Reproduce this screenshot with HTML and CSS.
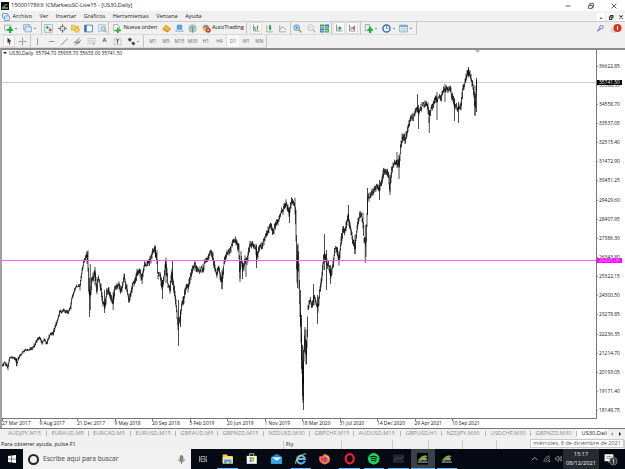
FILE: index.html
```html
<!DOCTYPE html>
<html lang="es">
<head>
    <meta charset="UTF-8">
    <meta name="viewport" content="width=device-width, initial-scale=1.0">
    <title>1500017863: ICMarketsSC-Live15 - [US30,Daily]</title>
    <link rel="stylesheet" href="styles.css">
</head>
<body>

<!-- Title bar -->
<header class="titlebar">
    <svg class="app-icon" viewBox="0 0 16 16"><rect width="16" height="16" fill="#050805"/><path d="M2 11l5-6 5-1 2 2-5 2-2 3z" fill="#5d7a45"/><path d="M2 12h12" stroke="#ddd" stroke-width="2"/></svg>
    <span class="title">1500017863: ICMarketsSC-Live15 - [US30,Daily]</span>
    <div class="window-buttons">
        <svg viewBox="0 0 10 10"><path d="M1 5h8"/></svg>
        <svg viewBox="0 0 10 10"><path d="M1 4h6v5H1zM3 4V1h6v6H7"/></svg>
        <svg viewBox="0 0 10 10"><path d="M1 1l8 8M9 1L1 9"/></svg>
    </div>
</header>

<!-- Menu -->
<nav class="menubar">
    <svg class="menu-icon" viewBox="0 0 16 16"><rect x="1" y="1" width="11" height="9" rx="1" fill="#e6f2fc" stroke="#3f87cf" stroke-width="1.500"/><rect x="5" y="6" width="10" height="9" rx="1" fill="#fff" stroke="#3f87cf" stroke-width="1.500"/><path d="M7 12l2-3 2 2 2-2" fill="none" stroke="#3f87cf"/></svg>
    <span>Archivo</span><span>Ver</span><span>Insertar</span><span>Gráficos</span><span>Herramientas</span><span>Ventana</span><span>Ayuda</span>
    <div class="child-buttons">
        <svg viewBox="0 0 10 10"><path d="M3.500 6.500h3"/></svg>
        <svg viewBox="0 0 10 10"><path d="M3 5h3v3H3zM4.500 4.500V3h3v3H6"/></svg>
        <svg viewBox="0 0 10 10"><path d="M3 3l4 4M7 3L3 7"/></svg>
    </div>
</nav>

<!-- Standard toolbar -->
<div class="toolbar toolbar-main">
    <div class="group group-new">
        <svg viewBox="0 0 16 16"><path d="M1 2h11v9H1z" fill="#f2f8f2" stroke="#779" /><path d="M9 5h4v4h3v3h-3v4H9v-4H5V9h4z" fill="#12b52a"/></svg><i class="caret"></i>
        <svg viewBox="0 0 16 16"><path d="M1 1h11v9H1z" fill="#d5e7f7" stroke="#4f86bb"/><path d="M4 5h11v9H4z" fill="#dcebf8" stroke="#4f86bb"/></svg><i class="caret"></i>
    </div>
    <div class="group group-panels">
        <svg viewBox="0 0 16 16"><path d="M1 1h14v14H1z" fill="#e8f3fc" stroke="#5a9bd5"/><path d="M3 6l3-3 3 3-3 3z" fill="#27a744"/><path d="M8 10l3-3 3 3-3 4z" fill="#e3552f"/></svg>
        <svg viewBox="0 0 16 16"><circle cx="8" cy="8" r="4.500" fill="none" stroke="#555" stroke-width="1.300"/><path d="M8 0v6M8 10v6M0 8h6M10 8h6" stroke="#555" stroke-width="1.300"/></svg>
        <svg viewBox="0 0 16 16"><path d="M1 2h5l1 2h6v7H1z" fill="#f6cf5d" stroke="#c99a25"/><path d="M11 6l1.500 3 3.500.5-2.500 2 .5 3.500-3-1.500L8 15l.5-3.500L6 9.500 9.500 9z" fill="#ffdf4f" stroke="#c99a25"/></svg>
        <svg viewBox="0 0 16 16"><path d="M1 2h14v12H1z" fill="#fff" stroke="#3b79bd" stroke-width="1.500"/><path d="M1 2h4v12H1z" fill="#3b79bd"/></svg>
        <svg viewBox="0 0 16 16"><path d="M1 1h12v12H1z" fill="#e3edf5" stroke="#8aabc6"/><circle cx="9" cy="8" r="3.500" fill="#cfe6fa" stroke="#4d82b0"/><path d="M12 11l3 4" stroke="#d79e2c" stroke-width="2"/></svg>
    </div>
    <div class="group group-trade">
        <svg viewBox="0 0 16 16"><path d="M3 1h7l3 3v8H3z" fill="#fff" stroke="#777"/><path d="M9 6h3v4h4v3h-4v3H9v-3H5v-3h4z" fill="#12b52a"/></svg><span class="label label-order">Nueva orden</span>
        <svg viewBox="0 0 16 16"><path d="M1 9l6-7 8 6-5 6z" fill="#f2b632" stroke="#c3861a"/><path d="M2 10l8 4 5-5" fill="none" stroke="#a96e13"/></svg>
        <svg viewBox="0 0 16 16"><path d="M4 2h8v7H4z" fill="#5ba8e8" stroke="#2877bd"/><path d="M1 13q2-5 6-3 4-2 8 3z" fill="#d8e7f4" stroke="#6b93b8"/></svg>
        <svg viewBox="0 0 16 16"><circle cx="8" cy="8" r="6.500" fill="#b9c7ce" stroke="#899aa3"/><path d="M8 7v8M5 7q3-4 6 0" stroke="#28a745" stroke-width="1.500" fill="none"/></svg>
        <svg viewBox="0 0 16 16"><circle cx="7" cy="7" r="6" fill="#efc14d"/><path d="M1 6q6-8 12 0z" fill="#3f90cf"/><circle cx="11" cy="11" r="4.500" fill="#df3121"/><path d="M9.500 9.500h3v3h-3z" fill="#fff"/></svg><span class="label label-auto">AutoTrading</span>
    </div>
    <div class="group group-type">
        <svg class="pressed" viewBox="0 0 16 16"><path d="M3 1v13h12" stroke="#777" stroke-width="1.500" fill="none"/><path d="M6 6v6M6 7H4M6 11h2M11 3v8M11 4h2M11 10H9" stroke="#24a33c" stroke-width="1.800"/></svg>
        <svg viewBox="0 0 16 16"><path d="M3 2v12h11" stroke="#777" fill="none"/><path d="M9 1v11" stroke="#128a2b"/><path d="M7 3h4v7H7z" fill="#1cae38"/></svg>
        <svg viewBox="0 0 16 16"><path d="M3 2v12h11" stroke="#777" fill="none"/><path d="M3 10l4-5 3 1 4 5" stroke="#299d3e" fill="none"/></svg>
    </div>
    <div class="group group-zoom">
        <svg viewBox="0 0 16 16"><path d="M10 10l5 5" stroke="#d6a034" stroke-width="3"/><circle cx="6.500" cy="6.500" r="5" fill="#d9efff" stroke="#2e80cc" stroke-width="1.500"/><path d="M4 6.500h5M6.500 4v5" stroke="#2e80cc" stroke-width="1.500"/></svg>
        <svg viewBox="0 0 16 16"><path d="M10 10l5 5" stroke="#aaa" stroke-width="2"/><circle cx="6.500" cy="6.500" r="5" fill="#f5f5f5" stroke="#aaa" stroke-width="1.300"/><path d="M4 6.500h5" stroke="#aaa"/></svg>
        <svg viewBox="0 0 16 16"><path d="M0 1h7.500v6H0zM8.500 8H16v7H8.500z" fill="#3aa742"/><path d="M8.500 1H16v6H8.500zM0 8h7.500v7H0z" fill="#3473be"/><path d="M1 5h6M9 5h6M1 12h6M9 12h6" stroke="#e9f5e9" stroke-width="1.500"/></svg>
    </div>
    <div class="group group-shift">
        <svg class="pressed" viewBox="0 0 16 16"><path d="M3 1v13h12M6 6v6" stroke="#777" stroke-width="1.500" fill="none"/><path d="M8 4l6 4.500L8 13z" fill="#1fab3b"/></svg>
        <svg class="pressed" viewBox="0 0 16 16"><path d="M3 1v13h12M6 5v7M13 3v10" stroke="#667a90" stroke-width="1.500" fill="none"/><path d="M13 4L7 8l6 4z" fill="#d65a30"/></svg>
    </div>
    <div class="group group-extra">
        <svg viewBox="0 0 16 16"><path d="M2 1h8v11H2z" fill="#e7efe7" stroke="#777"/><path d="M9 5h4v4h3v3h-3v4H9v-4H6V9h3z" fill="#12b52a"/></svg><i class="caret"></i>
        <svg viewBox="0 0 16 16"><circle cx="8" cy="8" r="6.300" fill="#eaf5ff" stroke="#2671bd" stroke-width="2.500"/><path d="M8 4v4h3" stroke="#444" fill="none"/></svg><i class="caret"></i>
        <svg viewBox="0 0 16 16"><path d="M1 2h14v12H1z" fill="#edf6fd" stroke="#4e8bc4"/><path d="M1 2h14v3H1z" fill="#63a0d6"/><path d="M3 8l3-1 3 1 4-1M3 11h10" stroke="#70a070" fill="none"/></svg><i class="caret"></i>
    </div>
    <div class="toolbar-right">
        <svg viewBox="0 0 16 16"><circle cx="10" cy="5" r="4" fill="#f5f8ff" stroke="#486fc4" stroke-width="2"/><path d="M7 8l-6 6" stroke="#486fc4" stroke-width="2.500"/></svg>
        <svg class="alert" viewBox="0 0 24 20"><path d="M2 13q5 6 11 3l-3-8q-6-1-8 5z" fill="#ddd" stroke="#aaa"/><circle cx="15" cy="8" r="8" fill="#dc341e"/><path d="M15 4v8" stroke="#fff" stroke-width="2"/></svg>
    </div>
</div>

<!-- Line studies and timeframes -->
<div class="toolbar toolbar-lines">
    <div class="group group-cursor">
        <svg class="pressed" viewBox="0 0 16 16"><path d="M5 1l8 8H9l2 5-2 1-2-5-2 2z" fill="#333"/></svg>
        <svg viewBox="0 0 16 16"><path d="M8 1v6M8 9v6M1 8h6M9 8h6" stroke="#777" stroke-width="1.300"/></svg>
    </div>
    <div class="group group-studies">
        <svg viewBox="0 0 16 16"><path d="M8 2v12" stroke="#777" stroke-width="1.300"/></svg>
        <svg viewBox="0 0 16 16"><path d="M3 8h10" stroke="#777" stroke-width="1.300"/></svg>
        <svg viewBox="0 0 16 16"><path d="M2 14L14 3" stroke="#666" stroke-width="1.300"/></svg>
        <svg viewBox="0 0 16 16"><path d="M1 11l11-9M3 15L15 5M5 8l4 5M8 5l3 6M4 10h8" stroke="#666" stroke-width="1.200"/></svg>
        <svg viewBox="0 0 16 16"><path d="M1 3h14M1 7h14M1 11h14" stroke="#777" stroke-dasharray="2 1"/><path d="M12 10v5" stroke="#777"/></svg>
        <b>A</b>
        <svg viewBox="0 0 16 16"><path d="M2 2h12v12H2z" fill="none" stroke="#888" stroke-dasharray="2 1"/><path d="M5 5h6M8 5v7" stroke="#555" stroke-width="1.600"/></svg>
        <svg viewBox="0 0 16 16"><path d="M1 5l4-4 4 4-4 3zM8 11l3-3 4 4-4 3z" fill="#444"/><path d="M4 6l7 6" stroke="#555"/></svg>
        <i class="caret"></i>
    </div>
    <div class="group group-frames">
        <span>M1</span><span>M5</span><span>M15</span><span>M30</span><span>H1</span><span>H4</span><span class="pressed">D1</span><span>W1</span><span>MN</span>
    </div>
</div>

<!-- Chart -->
<main class="chart">
    <div class="plot">
        <p class="chart-info"><i class="caret"></i><span>US30,Daily&nbsp; 35794.70 35935.70 35633.00 35741.50</span></p>
        <svg class="bars" id="bars" viewBox="2 50 594 368">
            <path d="M2 82.500h594" stroke="#cfcfcf" stroke-width="1"/>
            <path d="M475 50.300h5l-2.500 2.500z" fill="#aaa"/>
            <path id="history" fill="none" stroke="#000" stroke-width="0.700"/>
            <path d="M2 260.500h594" stroke="#ff5cff" stroke-width="1"/>
        </svg>
    </div>
    <div class="prices">
        <span>36622.85</span><span>35580.35</span><span>34558.70</span><span>33537.05</span><span>32515.40</span><span>31472.90</span><span>30451.25</span><span>29429.60</span><span>28407.95</span><span>27386.30</span><span>26343.80</span><span>25322.15</span><span>24300.50</span><span>23278.85</span><span>22236.35</span><span>21214.70</span><span>20193.05</span><span>19171.40</span><span>18149.75</span>
        <b class="tag tag-bid">35741.50</b>
        <b class="tag tag-line">26205.00</b>
    </div>
    <div class="dates">
        <span>27 Mar 2017</span><span>9 Aug 2017</span><span>21 Dec 2017</span><span>9 May 2018</span><span>20 Sep 2018</span><span>5 Feb 2019</span><span>20 Jun 2019</span><span>1 Nov 2019</span><span>18 Mar 2020</span><span>31 Jul 2020</span><span>14 Dec 2020</span><span>29 Apr 2021</span><span>10 Sep 2021</span>
    </div>
</main>

<!-- Chart tabs -->
<div class="tabs">
    <span>AUDJPY,M15</span><span>EURAUD,M5</span><span>EURCAD,M5</span><span>EURUSD,M15</span><span>GBPAUD,M5</span><span>GBPNZD,M15</span><span>NZDUSD,M30</span><span>GBPCHF,M15</span><span>AUDUSD,M15</span><span>GBPUSD,H1</span><span>NZDJPY,M30</span><span>USDCHF,M30</span><span>GBPNZD,M30</span><span class="active">US30,Dail</span>
    <i class="scroll scroll-left"></i><i class="scroll scroll-right"></i>
</div>

<!-- Status bar -->
<div class="status">
    <span>Para obtener ayuda, pulse F1</span><span>Fty</span><span></span><span></span><span></span><span></span><span></span>
    <div class="date-tip">miércoles, 8 de diciembre de 2021</div>
</div>

<!-- Windows taskbar -->
<footer class="taskbar">
    <div class="start"><svg viewBox="0 0 16 16"><path d="M0 2l7-1v6.500H0zM8 1l8-1v7.500H8zM0 8.500h7V15l-7-1zM8 8.500h8V16l-8-1z" fill="#fff"/></svg></div>
    <div class="search">
        <i class="cortana"></i><span>Escribe aquí para buscar</span>
        <svg viewBox="0 0 16 16"><rect x="5.500" y="1" width="5" height="9" rx="2.500" fill="#888" stroke="#555"/><path d="M3 7v1q0 4 5 4t5-4V7M8 12v4" fill="none" stroke="#555" stroke-width="1.300"/></svg>
    </div>
    <div class="apps">
        <div class="app"><svg viewBox="0 0 16 16"><path d="M4 3h8v10H4zM1 2v12M15 2v3M15 7v7M4 8h8" fill="none" stroke="#ddd" stroke-width="1.300"/></svg></div>
        <div class="app open"><svg viewBox="0 0 16 16"><path d="M1 2h6l1 2h7v11H1z" fill="#f5cf62"/><path d="M1 6h14v8H1z" fill="#fbe6a0"/><path d="M3 9h10v6h-3v-3H6v3H3z" fill="#3ba0de"/></svg></div>
        <div class="app"><svg viewBox="0 0 16 16"><path d="M5 4V1h6v3" fill="none" stroke="#eee"/><path d="M1 4h14v11H1z" fill="#fff"/><path d="M5 6h3v3H5z" fill="#f25022"/><path d="M8.500 6h3v3h-3z" fill="#7fba00"/><path d="M5 9.500h3v3H5z" fill="#00a4ef"/><path d="M8.500 9.500h3v3h-3z" fill="#ffb900"/></svg></div>
        <div class="app"><svg viewBox="0 0 16 16"><path d="M0 6l8-5 8 5v9H0z" fill="#1689d8"/><path d="M1 6h14l-7 5z" fill="#e8f5ff"/><path d="M0 6l8 6 8-6v9H0z" fill="#35a5ea"/></svg></div>
        <div class="app open"><svg viewBox="0 0 16 16"><path d="M13.500 11A5.500 5.500 0 1 1 13.800 8.500H4" fill="none" stroke="#55bdf0" stroke-width="2.800"/><path d="M1 15Q0 9 8 4t7-2" fill="none" stroke="#f5c945" stroke-width="1.300"/></svg></div>
        <div class="app"><svg viewBox="0 0 16 16"><path d="M1 4l3 1 4-4 2 3 3-1q4 6 1 10-6 6-12 0-3-4-1-9z" fill="#ff7830"/><path d="M8 1q6 3 6 8l-3-3z" fill="#ffd43b"/><circle cx="8" cy="9" r="3.500" fill="#934bd2"/><path d="M2 7q3-1 6 2-2 4-5 2z" fill="#ef3d50"/></svg></div>
        <div class="app open"><svg viewBox="0 0 16 16"><ellipse cx="8" cy="8" rx="5.600" ry="6.400" fill="none" stroke="#f01f2e" stroke-width="3.200"/></svg></div>
        <div class="app open"><svg viewBox="0 0 16 16"><circle cx="8" cy="8" r="8" fill="#1ed760"/><path d="M3 5.500q6-2 10 1M4 8.500q5-2 8 1M4.500 11q4-1.500 6.500.7" fill="none" stroke="#07160c" stroke-width="1.500"/></svg></div>
        <div class="app open"><svg viewBox="0 0 16 16"><path d="M0 2h16v12H0z" fill="#20262b"/><path d="M1 11l5-5 3 3 6-5" fill="none" stroke="#596068"/></svg></div>
        <div class="app open current"><svg viewBox="0 0 16 16"><path d="M0 0h16v16H0z" fill="#000"/><path d="M1 10l6-6 5-1 3 2-3 1 2 2-5 1-4 2z" fill="#79a44c"/><path d="M1 12.500h14M8 9.500h6" stroke="#ccc" stroke-width="1.500"/></svg></div>
        <div class="app open"><svg viewBox="0 0 16 16"><path d="M0 0h16v16H0z" fill="#000"/><path d="M1 10l6-6 5-1 3 2-3 1 2 2-5 1-4 2z" fill="#79a44c"/><path d="M1 12.500h14M8 9.500h6" stroke="#ccc" stroke-width="1.500"/></svg></div>
    </div>
    <div class="tray">
        <svg viewBox="0 0 16 16"><path d="M2 11l6-6 6 6" fill="none" stroke="#ddd" stroke-width="1.500"/></svg>
        <svg viewBox="0 0 16 16"><path d="M2 15Q2 3 15 2M6 15Q6 7 15 6M10 15q0-5 5-5" fill="none" stroke="#bbb" stroke-width="1.200"/><circle cx="13.500" cy="13.500" r="1.300" fill="#ddd"/></svg>
        <svg viewBox="0 0 16 16"><path d="M1 6h2l4-4v12l-4-4H1zM9 5q2 3 0 6M11 3q4 5 0 10M13 2q5 6 0 12" fill="none" stroke="#ddd"/></svg>
    </div>
    <div class="clock"><span>15:17</span><span>08/12/2021</span></div>
    <div class="notify"><svg viewBox="0 0 24 22"><path d="M1 2h15v12h-5l-3 3v-3H1z" fill="#fff"/><path d="M4 6h9M4 9h9" stroke="#444"/><circle cx="16" cy="14" r="6.500" fill="#333" stroke="#aaa"/><path d="M14.500 12l2-1.500V18" fill="none" stroke="#fff" stroke-width="1.300"/></svg></div>
</footer>

<script src="chart.js"></script>
</body>
</html>
```

FILE: styles.css
```css
* {
    box-sizing: border-box;
}

body {
    margin: 0;
    width: 625px;
    height: 469px;
    overflow: hidden;
    display: flex;
    flex-direction: column;
    background-color: #f0f0f0;
    font-family: 'Open Sans', 'Noto Sans', sans-serif;
    font-size: 5.7px;
    line-height: 1;
    color: #222;
    white-space: nowrap;
}

svg {
    display: block;
    flex: none;
}

/* Title and menu */
.titlebar {
    height: 11px;
    flex: none;
    display: flex;
    align-items: center;
    background-color: #fff;
}

.app-icon {
    width: 8px;
    height: 8px;
    margin: 0 2px 0 1px;
}

.title {
    font-size: 5.7px;
    letter-spacing: -0.07px;
}

.window-buttons {
    margin-left: auto;
    display: flex;
    gap: 17px;
    padding-right: 8px;
}

.window-buttons svg,
.child-buttons svg {
    width: 6px;
    height: 6px;
    fill: none;
    stroke: #333;
    stroke-width: 1.3;
}

.menubar {
    height: 11px;
    flex: none;
    display: flex;
    align-items: center;
    gap: 7.5px;
    padding-top: 1px;
    font-size: 5.6px;
    border-bottom: 1px solid #ccc;
}

.menu-icon {
    width: 8px;
    height: 8px;
    margin: 0 -5px 0 2px;
}

.child-buttons {
    margin-left: auto;
    display: flex;
    gap: 2px;
}

.child-buttons svg {
    width: 8px;
    height: 8px;
    background-color: #fff;
}

/* Toolbars */
.toolbar {
    display: flex;
    flex: none;
}

.toolbar-main {
    height: 13px;
}

.toolbar-lines {
    height: 13px;
}

.group {
    display: flex;
    align-items: center;
    flex: none;
    border-right: 1px solid #c4c4c4;
    border-bottom: 1px solid #dadada;
}

.group svg {
    width: 9px;
    height: 9px;
    margin: 0 2.2px;
}

.group svg.pressed {
    width: 12px;
    height: 12px;
    margin: 0 0.7px;
    padding: 1px;
    background-color: #fafafa;
    border: 1px solid #ddd;
}

.caret {
    flex: none;
    width: 0;
    height: 0;
    border: 1.3px solid transparent;
    border-top-color: #222;
    border-bottom: 0;
}

.group-new {
    width: 42px;
    padding-left: 2px;
}

.group-new svg + .caret {
    margin-right: 3px;
}

.group-panels {
    width: 67px;
}

.group-trade {
    width: 138px;
    padding-left: 1px;
}

.label {
    font-size: 5.8px;
    letter-spacing: -0.12px;
}

.label-order {
    width: 36px;
}

.label-auto {
    margin-left: -1px;
}

.group-type {
    width: 44px;
    padding-left: 2px;
}

.group-zoom {
    width: 41px;
}

.group-shift {
    width: 29px;
}

.group-extra {
    width: 56px;
    padding-left: 1px;
}

.group-extra .caret {
    margin-right: 2px;
}

.toolbar-right {
    margin-left: auto;
    display: flex;
    align-items: center;
    gap: 6px;
    padding-right: 3px;
}

.toolbar-right svg {
    width: 7px;
    height: 7px;
}

.toolbar-right .alert {
    width: 12px;
    height: 10px;
}

.group-cursor {
    width: 31px;
    padding-left: 2px;
}

.group-studies {
    width: 113px;
}

.group-studies b {
    width: 13.4px;
    text-align: center;
    color: #555;
}

.group-studies .caret {
    margin-left: -1px;
}

.group-frames {
    width: 123px;
    padding-left: 2px;
    font-size: 4.8px;
    color: #666;
}

.group-frames span {
    width: 13.4px;
    height: 12px;
    line-height: 12px;
    text-align: center;
}

.group-frames .pressed {
    background-color: #fafafa;
    border-left: 1px solid #ddd;
}

/* Chart */
.chart {
    height: 380px;
    flex: none;
    display: grid;
    grid-template-columns: 595px 1fr;
    grid-template-rows: 369px 1fr;
    background-color: #fff;
    border-left: 2px solid #a0a0a0;
    border-top: 2px solid #8c8c8c;
    font-size: 4.9px;
    color: #111;
}

.plot {
    position: relative;
    border-right: 1px solid #777;
    border-bottom: 1px solid #777;
}

.bars {
    width: 594px;
    height: 368px;
}

.chart-info {
    position: absolute;
    top: 1px;
    left: 1px;
    margin: 0;
    display: flex;
    align-items: center;
    gap: 2px;
    letter-spacing: -0.02px;
}

.chart-info .caret {
    border-width: 2px;
    border-bottom: 0;
}

.prices {
    position: relative;
    padding-top: 6.5px;
}

.prices span {
    display: flex;
    align-items: center;
    height: 19.15px;
}

.prices span::before {
    content: "";
    width: 1px;
    height: 1px;
    margin-right: 1px;
    background-color: #999;
}

.tag {
    position: absolute;
    left: 0;
    width: 25px;
    height: 5px;
    padding-left: 2px;
    line-height: 5px;
    font-weight: normal;
    color: #fff;
}

.tag-bid {
    top: 30px;
    background-color: #000;
}

.tag-line {
    top: 208px;
    background-color: #f0f;
    color: #ffb8ff;
}

.dates {
    grid-column: 1 / -1;
    display: grid;
    grid-template-columns: repeat(13, 37.5px);
}

.dates span::before {
    content: "";
    display: block;
    width: 1px;
    height: 1.5px;
    background-color: #777;
}

/* Chart tabs */
.tabs {
    height: 11px;
    flex: none;
    display: grid;
    grid-template-columns: 47px 41.5px 42.5px 45px 42px 46px 46px 44px 47px 41px 44px 45px 46px 31px 8px 8px;
    align-items: center;
    padding-bottom: 1px;
    border-top: 1px solid #777;
    color: #8c8c8c;
    font-size: 5.7px;
}

.tabs span {
    padding-left: 4.5px;
    border-right: 1px solid #b5b5b5;
}

.tabs span:first-child {
    padding-left: 8px;
}

.tabs .active {
    align-self: stretch;
    padding-top: 2px;
    background-color: #fff;
    color: #111;
    border-right: 0;
}

.scroll {
    width: 0;
    height: 0;
    justify-self: center;
    border: 2px solid transparent;
}

.scroll-left {
    border-right-color: #999;
    border-left: 0;
}

.scroll-right {
    border-left-color: #111;
    border-right: 0;
}

/* Status bar */
.status {
    position: relative;
    height: 10px;
    flex: none;
    display: grid;
    grid-template-columns: 284px 58px 51px 36px 34px 34px 128px;
    align-items: center;
}

.status span {
    height: 9px;
    padding-left: 1px;
    line-height: 9px;
    font-size: 5.5px;
    border-right: 1px solid #ccc;
}

.status span:nth-child(2) {
    padding-left: 2px;
}

.date-tip {
    position: absolute;
    right: 1px;
    top: 0;
    width: 94px;
    height: 9px;
    line-height: 7px;
    text-align: center;
    font-size: 5.5px;
    color: #555;
    background-color: #fff;
    border: 1px solid #c8c8c8;
}

/* Taskbar */
.taskbar {
    height: 20px;
    flex: none;
    display: flex;
    background-color: #060b13;
    color: #eee;
}

.start {
    width: 23px;
    display: grid;
    place-items: center;
}

.start svg {
    width: 8px;
    height: 8px;
}

.search {
    width: 168px;
    display: flex;
    align-items: center;
    padding: 0 5px;
    background-color: #f1f1f1;
    color: #444;
    font-size: 6.6px;
}

.cortana {
    width: 11px;
    height: 11px;
    margin-right: 4px;
    border: 2px solid #222;
    border-radius: 50%;
}

.search svg {
    width: 9px;
    height: 9px;
    margin-left: auto;
}

.apps {
    display: flex;
}

.app {
    width: 24.4px;
    display: grid;
    place-items: center;
    position: relative;
}

.app svg {
    width: 11.5px;
    height: 11.5px;
}

.app:first-child svg {
    width: 8px;
    height: 8px;
}

.app.open::after {
    content: "";
    position: absolute;
    left: 2px;
    right: 2px;
    bottom: 0;
    height: 1px;
    background-color: #6fb7ee;
}

.app.current {
    background-color: #3b4148;
}

.app.current::after {
    left: 0;
    right: 0;
}

.tray {
    margin-left: auto;
    display: flex;
    align-items: center;
    gap: 4.5px;
    padding-right: 1px;
}

.tray svg {
    width: 7.5px;
    height: 7.5px;
}

.clock {
    width: 36px;
    display: flex;
    flex-direction: column;
    justify-content: center;
    align-items: center;
    gap: 3px;
    background-color: #262b32;
}

.notify {
    width: 26px;
    padding-left: 5px;
    display: flex;
    align-items: center;
}

.notify svg {
    width: 14px;
    height: 13px;
}
```

FILE: chart.js
```js
// Trend of the daily closes: x, y
const trend = [
    [2, 365], [5, 363], [8, 367], [10, 358], [15, 358], [17, 363], [19, 357], [25, 350], [30, 350], [34, 346],
    [39, 337], [42, 342], [44, 340], [47, 343], [50, 334], [53, 333], [56, 325], [60, 312], [64, 310], [68, 313],
    [71, 306], [72, 297], [76, 287], [80, 286], [82, 272], [84, 261], [87, 255], [88, 262], [89, 293], [91, 291],
    [92, 280], [94, 275], [95, 272], [97, 290], [98, 278], [101, 288], [103, 304], [105, 305], [107, 292], [109, 290],
    [112, 300], [113, 302], [115, 288], [119, 285], [121, 291], [124, 278], [126, 286], [129, 299], [132, 288], [136, 277],
    [138, 271], [140, 273], [142, 278], [145, 263], [148, 264], [151, 258], [153, 251], [155, 250], [157, 258], [158, 275],
    [160, 273], [162, 288], [164, 278], [166, 262], [168, 285], [170, 291], [172, 272], [174, 288], [176, 305], [178, 325],
    [180, 320], [182, 305], [184, 298], [186, 288], [188, 288], [190, 278], [193, 268], [195, 264], [198, 271], [200, 270],
    [203, 270], [205, 260], [208, 258], [211, 253], [213, 257], [215, 268], [217, 274], [219, 268], [221, 278], [222, 283],
    [224, 263], [227, 253], [230, 250], [234, 240], [237, 242], [239, 252], [240, 272], [241, 258], [243, 270], [245, 260],
    [247, 262], [250, 243], [253, 246], [256, 248], [257, 258], [259, 247], [262, 246], [265, 238], [268, 230], [271, 225],
    [273, 232], [276, 224], [278, 220], [281, 213], [284, 208], [286, 203], [289, 213], [292, 201], [295, 204], [296, 225],
    [297, 275], [298, 250], [299, 275], [300, 312], [301, 330], [302, 365], [303, 390], [304, 355], [305, 335], [306, 358],
    [307, 340], [308, 310], [310, 300], [312, 305], [314, 297], [316, 303], [318, 308], [320, 290], [322, 275], [324, 255],
    [326, 260], [328, 265], [331, 275], [333, 265], [335, 250], [337, 249], [339, 260], [341, 243], [343, 228], [345, 232],
    [348, 216], [351, 232], [354, 245], [355, 248], [357, 230], [360, 213], [363, 222], [364, 240], [366, 245], [367, 218],
    [368, 198], [370, 196], [373, 191], [376, 188], [379, 188], [382, 182], [384, 170], [387, 172], [389, 180], [390, 186],
    [392, 168], [396, 162], [399, 165], [401, 145], [403, 135], [405, 140], [408, 128], [411, 117], [414, 116], [417, 108],
    [419, 113], [422, 105], [425, 103], [428, 108], [429, 117], [431, 108], [434, 103], [437, 98], [441, 97], [444, 89],
    [447, 90], [450, 89], [452, 95], [455, 106], [458, 109], [461, 105], [463, 88], [466, 78], [468, 71], [470, 75],
    [472, 82], [474, 92], [475, 108], [476, 92], [477, 80]
];

// Days with a wide range: x, high, low
const spikes = [
    [16.5, 358, 366], [87, 252, 264], [89.5, 278, 317], [90.3, 264, 310], [95, 267, 285], [104.5, 290, 313], [113.2, 292, 310],
    [142.2, 273, 284], [155.5, 246, 258], [162.5, 280, 299], [166, 260, 283], [172.5, 261, 285], [178.5, 300, 346], [180.5, 310, 327],
    [222, 270, 289], [240, 260, 282], [242.5, 262, 279], [246, 260, 277], [256.5, 245, 268], [289.5, 210, 223],
    [297.5, 245, 288], [300.5, 290, 325], [301.5, 315, 369], [302.5, 345, 396], [303.1, 360, 400], [303.5, 350, 410],
    [305, 327, 350], [306.5, 340, 364], [313.5, 284, 305], [317.5, 295, 324], [324.5, 234, 270], [326.5, 250, 290],
    [330.5, 265, 284], [348.5, 205, 220], [355, 235, 254], [365.3, 225, 263], [367.5, 188, 215], [379.5, 180, 200],
    [390, 175, 195], [397, 152, 168], [399, 155, 179], [417.5, 94, 112], [418.5, 105, 129], [429.3, 110, 133],
    [437, 92, 120], [445, 84, 102], [454.5, 98, 121], [458.5, 102, 123], [468.5, 67, 77], [475, 96, 115.5], [476.5, 78, 112]
];

let seed = 17;

function random() {
    seed = (seed * 16807) % 2147483647;
    return seed / 2147483647;
}

function drawHistory() {
    let d = '';
    for (let i = 1; i < trend.length; i++) {
        const [x1, y1] = trend[i - 1];
        const [x2, y2] = trend[i];
        // The market is calmer at the start of the chart
        const range = x1 < 86 ? 1.7 : 3.4;
        for (let x = x1; x < x2; x += 0.5) {
            const y = y1 + (y2 - y1) * (x - x1) / (x2 - x1) + (random() - 0.5) * range;
            const step = Math.abs(y2 - y1) / (x2 - x1) * 0.3;
            const high = y - step - random() * range;
            const low = y + step + random() * range;
            d += `M${x} ${high.toFixed(1)}V${low.toFixed(1)}`;
        }
    }
    spikes.forEach(([x, high, low]) => {
        d += `M${x} ${high}V${low}`;
    });
    document.getElementById('history').setAttribute('d', d);
}

drawHistory();
```
